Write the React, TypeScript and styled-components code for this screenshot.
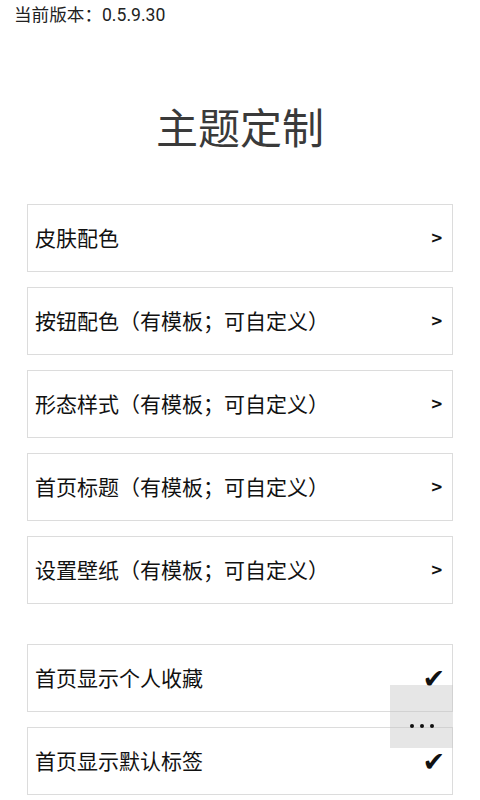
import React from "react";
import styled, { createGlobalStyle } from "styled-components";

const Global = createGlobalStyle`
  html, body { margin: 0; padding: 0; background: #fff; }
  body { font-family: Roboto, "Noto Sans CJK SC", "Noto Sans", sans-serif; }
`;

const Page = styled.div`
  position: relative;
  width: 480px;
  height: 800px;
  overflow: hidden;
  background: #fff;
`;

const Version = styled.div`
  padding: 4px 0 0 14px;
  height: 22px;
  font-size: 17.6px;
  line-height: 22px;
  color: #222;
`;

const Title = styled.h1`
  margin: 0;
  padding-top: 74px;
  height: 60px;
  line-height: 60px;
  text-align: center;
  font-size: 42px;
  font-weight: 400;
  color: #3a3a3a;
`;

const List = styled.div<{ $top: number }>`
  display: flex;
  flex-direction: column;
  gap: 15px;
  margin: ${(p) => p.$top}px 27px 0 27px;
`;

const Row = styled.div`
  display: flex;
  align-items: center;
  justify-content: space-between;
  box-sizing: border-box;
  height: 68px;
  border: 1px solid #dcdcdc;
  padding: 0 9px 2px 7px;
`;

const Label = styled.span`
  font-size: 21px;
  color: #111;
`;

const Arrow = styled.span`
  font-family: "DejaVu Sans", sans-serif;
  font-weight: 700;
  font-size: 15px;
  color: #111;
  margin-top: 2px;
`;

const Check = styled.span`
  font-family: "DejaVu Sans", sans-serif;
  font-size: 27px;
  line-height: 1;
  color: #111;
  margin-right: -2px;
  margin-top: 2px;
`;

const MoreButton = styled.div`
  position: absolute;
  left: 390px;
  top: 685px;
  width: 63px;
  height: 63px;
  background: rgba(195, 195, 195, 0.42);
  display: flex;
  justify-content: center;
  align-items: flex-end;
  padding-bottom: 20px;
  box-sizing: border-box;
  gap: 6px;
`;

const Dot = styled.span`
  width: 4px;
  height: 4px;
  border-radius: 50%;
  background: #111;
`;

const menu = [
  "皮肤配色",
  "按钮配色（有模板；可自定义）",
  "形态样式（有模板；可自定义）",
  "首页标题（有模板；可自定义）",
  "设置壁纸（有模板；可自定义）",
];

const toggles = ["首页显示个人收藏", "首页显示默认标签"];

export default function App() {
  return (
    <Page>
      <Global />
      <Version>当前版本：0.5.9.30</Version>
      <Title>主题定制</Title>
      <List $top={44}>
        {menu.map((m) => (
          <Row key={m}>
            <Label>{m}</Label>
            <Arrow>&gt;</Arrow>
          </Row>
        ))}
      </List>
      <List $top={40}>
        {toggles.map((t) => (
          <Row key={t}>
            <Label>{t}</Label>
            <Check>✔</Check>
          </Row>
        ))}
      </List>
      <MoreButton>
        <Dot />
        <Dot />
        <Dot />
      </MoreButton>
    </Page>
  );
}
